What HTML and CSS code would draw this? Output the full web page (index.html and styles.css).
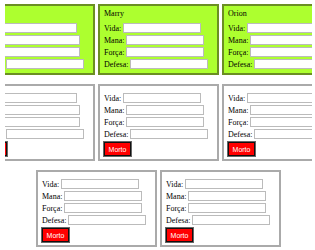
FILE: index.html
```html
<!DOCTYPE html>
<html>
<head>
    <title>Personagens</title>
    <link rel="stylesheet" href="styles.css">
</head>
<body>
    <div class="rows">
        <div class="row">
            <div class="card alive">
                <div class="name">Ana</div>
                <div class="field">Vida: <input type="text"></div>
                <div class="field">Mana: <input type="text"></div>
                <div class="field">Força: <input type="text"></div>
                <div class="field">Defesa: <input type="text"></div>
            </div>
            <div class="card alive">
                <div class="name">Marry</div>
                <div class="field">Vida: <input type="text"></div>
                <div class="field">Mana: <input type="text"></div>
                <div class="field">Força: <input type="text"></div>
                <div class="field">Defesa: <input type="text"></div>
            </div>
            <div class="card alive">
                <div class="name">Orion</div>
                <div class="field">Vida: <input type="text"></div>
                <div class="field">Mana: <input type="text"></div>
                <div class="field">Força: <input type="text"></div>
                <div class="field">Defesa: <input type="text"></div>
            </div>
        </div>

        <div class="row">
            <div class="card dead">
                <div class="field">Vida: <input type="text"></div>
                <div class="field">Mana: <input type="text"></div>
                <div class="field">Força: <input type="text"></div>
                <div class="field">Defesa: <input type="text"></div>
                <button class="dead-btn">Morto</button>
            </div>
            <div class="card dead">
                <div class="field">Vida: <input type="text"></div>
                <div class="field">Mana: <input type="text"></div>
                <div class="field">Força: <input type="text"></div>
                <div class="field">Defesa: <input type="text"></div>
                <button class="dead-btn">Morto</button>
            </div>
            <div class="card dead">
                <div class="field">Vida: <input type="text"></div>
                <div class="field">Mana: <input type="text"></div>
                <div class="field">Força: <input type="text"></div>
                <div class="field">Defesa: <input type="text"></div>
                <button class="dead-btn">Morto</button>
            </div>
        </div>

        <div class="row">
            <div class="card dead">
                <div class="field">Vida: <input type="text"></div>
                <div class="field">Mana: <input type="text"></div>
                <div class="field">Força: <input type="text"></div>
                <div class="field">Defesa: <input type="text"></div>
                <button class="dead-btn">Morto</button>
            </div>
            <div class="card dead">
                <div class="field">Vida: <input type="text"></div>
                <div class="field">Mana: <input type="text"></div>
                <div class="field">Força: <input type="text"></div>
                <div class="field">Defesa: <input type="text"></div>
                <button class="dead-btn">Morto</button>
            </div>
        </div>
    </div>
</body>
</html>
```

FILE: styles.css
```css
body {
    font-family: "Liberation Serif", "Times New Roman", serif;
    font-size: 8px;
    color: #000;
    background-color: #fff;
    margin: 4px 3px 4px 5px;
}

.rows {
    display: flex;
    flex-direction: column;
    gap: 9px;
}

.row {
    display: flex;
    justify-content: center;
    gap: 3px;
}

.card {
    flex: none;
    width: 121px;
    box-sizing: border-box;
    padding: 6px 4px 3px 4px;
}

.alive {
    background-color: #adff2f;
    border: 2px solid #6b8e23;
    padding-top: 4px;
}

.dead {
    background-color: #fff;
    border: 2px solid #aaa;
}

.name {
    line-height: 8px;
    height: 8px;
    margin-bottom: 4px;
}

.field {
    display: flex;
    align-items: center;
    gap: 2px;
    height: 12px;
    white-space: nowrap;
}

.field input {
    width: 78px;
    height: 10px;
    box-sizing: border-box;
    border: 1px solid #bbb;
    padding: 0;
    margin: 0;
    background-color: #fff;
}

.dead-btn {
    display: block;
    margin-top: 2px;
    width: 27px;
    height: 14px;
    padding: 0;
    box-sizing: border-box;
    background-color: #f00;
    color: #fff;
    border: 1px solid #111;
    box-shadow: 0 0 0 1px #666;
    font-family: "Liberation Sans", Arial, sans-serif;
    font-size: 7px;
}
```
